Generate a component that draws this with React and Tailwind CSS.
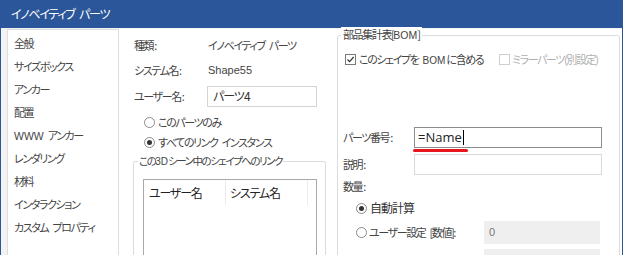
import React from "react";

const sp = "\u2002";

const navItems = [
  "全般",
  "サイズボックス",
  "アンカー",
  "配置",
  "WWW",
  "レンダリング",
  "材料",
  "インタラクション",
  "カスタム" + sp + "プロパティ",
];

function Radio({ checked }) {
  return (
    <span className="w-[11px] h-[11px] rounded-full border border-[#8a8a8a] bg-white flex items-center justify-center shrink-0">
      {checked && <span className="w-[5px] h-[5px] rounded-full bg-[#333]" />}
    </span>
  );
}

function Checkbox({ checked, disabled }) {
  return (
    <span
      className={
        "w-[11px] h-[11px] border bg-white flex items-center justify-center shrink-0 " +
        (disabled ? "border-[#cfcfcf]" : "border-[#7a7a7a]")
      }
    >
      {checked && (
        <svg width="9" height="9" viewBox="0 0 9 9">
          <path d="M1.5 4.5 L3.6 6.6 L7.6 2" fill="none" stroke="#333" strokeWidth="1.2" />
        </svg>
      )}
    </span>
  );
}

const latin = "font-['Liberation_Sans',sans-serif] tracking-normal";

export default function App() {
  return (
    <div className="w-[623px] h-[255px] overflow-hidden bg-[#f3f3f3] border-x border-[#2b579a] flex flex-col font-['Noto_Sans_CJK_JP',sans-serif] [font-feature-settings:'palt'] text-[11px] tracking-[-1.4px] text-[#444] whitespace-nowrap">
      {/* タイトルバー */}
      <div className="h-[28px] shrink-0 bg-[#2b579a] text-white flex items-center pl-[10px] text-[12px] tracking-[-1.3px]">
        イノベイティブ{sp}パーツ
      </div>

      <div className="flex flex-1 pt-[1px]">
        {/* 左ナビ */}
        <div className="ml-[6px] w-[112px] bg-white border border-[#dedede] pt-[2px] shrink-0">
          {navItems.map((item) => (
            <div key={item} className="h-[23px] leading-[23px] pl-[6px]">
              {item === "WWW" ? (
                <>
                  <span className={latin + " text-[10.5px]"}>WWW</span>
                  {sp}アンカー
                </>
              ) : (
                item
              )}
            </div>
          ))}
        </div>

        {/* 中央カラム */}
        <div className="flex-1 bg-white flex">
          <div className="w-[218px] pl-[15px] shrink-0">
            <div className="mt-[4px] h-[24px] flex items-center">
              <span className="w-[74px]">種類 :</span>
              <span>イノベイティブ{sp}パーツ</span>
            </div>
            <div className="mt-[1px] h-[24px] flex items-center">
              <span className="w-[74px]">システム名 :</span>
              <span className={latin + " text-[11px]"}>Shape55</span>
            </div>
            <div className="mt-[2px] h-[24px] flex items-center">
              <span className="w-[73px]">ユーザー名 :</span>
              <div className="w-[110px] h-[21px] border border-[#d4d4d4] bg-white flex items-center pl-[5px] text-[#333] text-[12px] tracking-[-1px]">
                パーツ4
              </div>
            </div>
            <div className="mt-[4px] h-[20px] flex items-center gap-[3px] pl-[10px]">
              <Radio />
              <span>このパーツのみ</span>
            </div>
            <div className="h-[20px] flex items-center gap-[3px] pl-[10px]">
              <Radio checked />
              <span>すべてのリンク{sp}インスタンス</span>
            </div>

            <div className="mt-[9px] -ml-[1px] w-[193px] h-[120px] border border-[#dcdcdc] rounded-[2px] pl-[9px]">
              <div className="-mt-[8px] -ml-[5px] w-fit bg-white px-[1px] leading-[14px] text-[10.5px] tracking-[-1.5px]">
                この<span className={latin + " text-[10px]"}>3D</span>シーン中のシェイプへのリンク
              </div>
              <div className="mt-[10px] w-[174px] h-[120px] border border-[#a9a9a9] bg-white">
                <div className="h-[25px] flex text-[#222] text-[12px] tracking-[-1.2px]">
                  <div className="w-[82px] border-r border-[#ececec] pl-[5px] flex items-center">ユーザー名</div>
                  <div className="w-[82px] border-r border-[#ececec] pl-[4px] flex items-center">システム名</div>
                </div>
              </div>
            </div>
          </div>

          {/* 右カラム BOM */}
          <div className="mt-[6px] w-[283px] h-[240px] border border-[#dcdcdc] rounded-[3px] shrink-0">
            <div className="-mt-[9px] ml-[3px] w-fit bg-white px-[2px] leading-[14px]">
              部品集計表[<span className={latin + " text-[10.5px]"}>BOM</span>]
            </div>

            <div className="mt-[9px] h-[16px] flex items-center pl-[7px]">
              <div className="flex items-center gap-[3px] w-[154px]">
                <Checkbox checked />
                <span>
                  このシェイプを{sp}
                  <span className={latin + " text-[10px] tracking-[-0.5px]"}>BOM</span>
                  {" "}に含める
                </span>
              </div>
              <div className="flex items-center gap-[2px] text-[#b0b0b0]">
                <Checkbox disabled />
                <span>ミラーパーツ(別設定)</span>
              </div>
            </div>

            <div className="mt-[60px] h-[21px] flex items-center pl-[5px]">
              <span className="w-[71px]">パーツ番号 :</span>
              <div className="relative w-[188px] h-[21px] border border-[#8c8c8c] bg-white flex items-center pl-[3px] font-['Open_Sans',sans-serif] tracking-normal text-[13px] text-[#222]">
                =Name
                <span className="w-[1px] h-[15px] bg-black ml-[1px]" />
                <span className="absolute left-[-2px] top-[21px] w-[55px] h-[3px] rounded-full bg-[#e8141e]" />
              </div>
            </div>

            <div className="mt-[6px] h-[21px] flex items-center pl-[5px]">
              <span className="w-[71px]">説明 :</span>
              <div className="w-[188px] h-[21px] border border-[#d9d9d9] bg-white" />
            </div>

            <div className="mt-[3px] h-[16px] flex items-center pl-[5px]">数量 :</div>

            <div className="mt-[6px] h-[16px] flex items-center gap-[3px] pl-[18px]">
              <Radio checked />
              <span className="text-[#333] text-[12px] tracking-[-1px]">自動計算</span>
            </div>

            <div className="mt-[5px] h-[23px] flex items-center pl-[18px]">
              <div className="w-[128px] flex items-center gap-[2px]">
                <Radio />
                <span>ユーザー設定{sp}[数値]:</span>
              </div>
              <div className={"w-[116px] h-[23px] bg-[#efefef] flex items-center pl-[5px] text-[#777] " + latin}>0</div>
            </div>

            <div className="mt-[5px] h-[23px] flex items-center pl-[18px]">
              <div className="w-[128px] flex items-center gap-[2px]">
                <Radio />
                <span>ユーザー設定{sp}[式]:</span>
              </div>
              <div className="w-[116px] h-[23px] bg-[#efefef]" />
            </div>
          </div>
        </div>
      </div>
    </div>
  );
}
